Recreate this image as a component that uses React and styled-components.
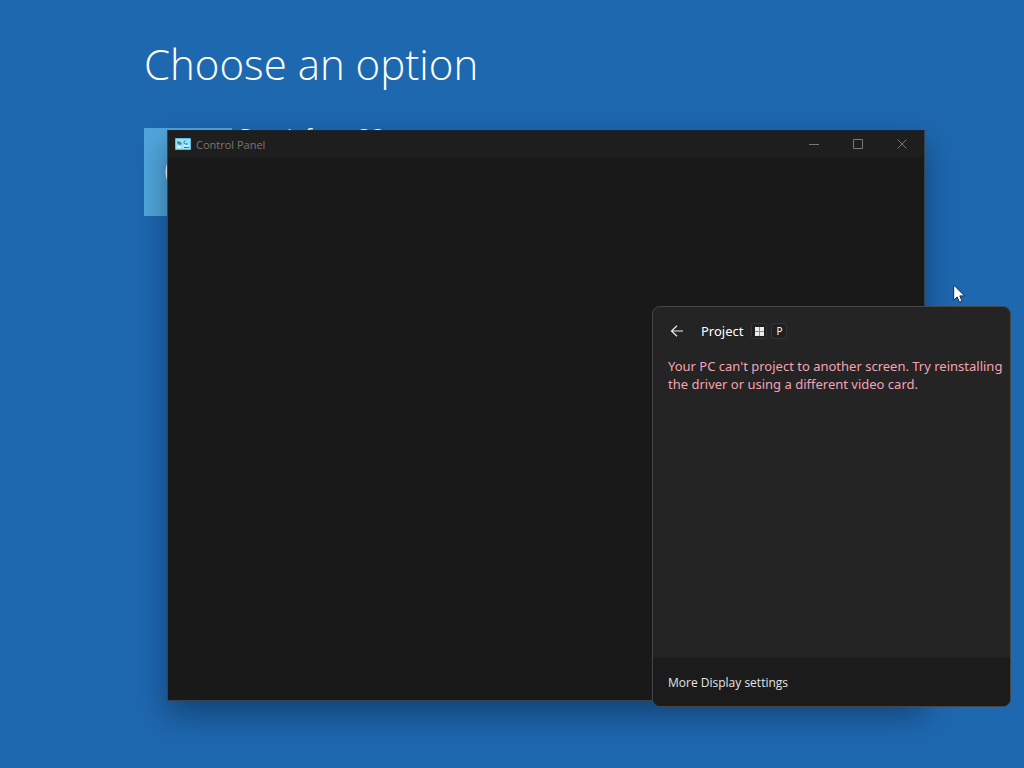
import React from "react";
import styled, { createGlobalStyle } from "styled-components";

const GlobalStyle = createGlobalStyle`
    * {
        box-sizing: border-box;
    }

    body {
        margin: 0;
        background-color: #1e68b0;
        font-family: "Open Sans", "Noto Sans", sans-serif;
        overflow: hidden;
    }

    button {
        padding: 0;
        border: none;
        background: none;
        color: inherit;
        font: inherit;
    }
`;

const Desktop = styled.div`
    position: relative;
    min-height: 100vh;
    overflow: hidden;
    background-color: #1e68b0;
`;

const Recovery = styled.main`
    padding: 34px 144px;
    color: #fff;
`;

const Heading = styled.h1`
    margin: 0 0 34px;
    font-size: 42px;
    line-height: 60px;
    font-weight: 300;
`;

const Option = styled.button`
    display: flex;
    align-items: flex-start;
    gap: 8px;
    text-align: left;
`;

const OptionTile = styled.span`
    display: grid;
    place-items: center;
    width: 88px;
    height: 88px;
    background-color: #50a7dd;
`;

const OptionName = styled.span`
    font-size: 20px;
    line-height: 16px;
`;

const ControlPanelWindow = styled.section`
    position: absolute;
    top: 130px;
    right: 99px;
    bottom: 67px;
    left: 167px;
    border: 1px solid #35434f;
    border-top-color: #1c2530;
    background-color: #191919;
    box-shadow: 0 14px 30px rgba(0, 10, 30, 0.4);
`;

const TitleBar = styled.header`
    display: flex;
    align-items: center;
    height: 26px;
    padding-left: 7px;
    background-color: #1e1e1e;
    color: #777;
`;

const WindowTitle = styled.h2`
    flex: 1;
    margin: 0 0 0 5px;
    font-size: 11px;
    font-weight: 400;
`;

const CaptionButton = styled.button`
    display: grid;
    place-items: center;
    width: 44px;
    height: 26px;
`;

const Flyout = styled.section`
    position: absolute;
    right: 13px;
    bottom: 61px;
    display: flex;
    flex-direction: column;
    width: 359px;
    height: 401px;
    border: 1px solid #464646;
    border-radius: 8px;
    overflow: hidden;
    background-color: #242424;
    color: #fff;
    font-family: "Noto Sans", "Open Sans", sans-serif;
`;

const FlyoutHeader = styled.header`
    display: flex;
    align-items: center;
    height: 48px;
    padding-left: 16px;
`;

const BackButton = styled.button`
    display: grid;
    place-items: center;
    width: 16px;
    height: 24px;
    margin-right: 16px;
`;

const FlyoutTitle = styled.h2`
    margin: 0 8px 0 0;
    font-size: 13px;
    font-weight: 400;
`;

const Key = styled.kbd`
    display: grid;
    place-items: center;
    width: 16px;
    height: 16px;
    margin-right: 4px;
    border: 1px solid #333;
    border-radius: 3px;
    background-color: #202020;
    font-family: inherit;
    font-size: 10px;
    line-height: 12px;
`;

const Message = styled.p`
    flex: 1;
    margin: 2px 0 0;
    padding: 0 4px 0 15px;
    color: #f5a3b4;
    font-size: 13px;
    line-height: 18px;
`;

const FlyoutFooter = styled.footer`
    display: flex;
    align-items: center;
    height: 49px;
    padding-left: 15px;
    border-top: 1px solid #202020;
    background-color: #1b1b1b;
`;

const SettingsLink = styled.a`
    color: #e4e4e4;
    font-family: "Open Sans", "Noto Sans", sans-serif;
    font-size: 12px;
    text-decoration: none;
`;

const Pointer = styled.svg`
    position: absolute;
    top: 284px;
    left: 953px;
`;

const ControlPanelIcon = () => (
    <svg width="16" height="12" viewBox="0 0 16 12" aria-hidden="true">
        <rect width="16" height="12" rx="1" fill="#58bde8" />
        <rect x="1" y="1" width="14" height="10" fill="#9ae0f5" />
        <path d="M2 3.5a3 3 0 0 0 5 2.5L5 3.5z" fill="#268abf" />
        <path d="M5 3.5V1.5h2.5z" fill="#d9e78b" />
        <path d="M10.5 2.5l-2 2 2 1.5h2.5" stroke="#286f9f" fill="none" />
        <path d="M2 9h4M8 9l2-2 1 1 3-1" stroke="#fff" fill="none" />
        <path d="M9 9.5h5" stroke="#2b81b6" />
    </svg>
);

const captions = [
    { label: "Minimize", path: "M0 5.5h10" },
    { label: "Maximize", path: "M.5 .5h9v9h-9z" },
    { label: "Close", path: "M.5 .5l9 9M9.5 .5l-9 9" },
];

const App = () => {
    return (
        <Desktop>
            <GlobalStyle />
            <Recovery>
                <Heading>Choose an option</Heading>
                <Option type="button">
                    <OptionTile>
                        <svg width="46" height="46" viewBox="0 0 46 46" aria-hidden="true">
                            <circle cx="23" cy="23" r="21" fill="none" stroke="#fff" strokeWidth="3" />
                        </svg>
                    </OptionTile>
                    <OptionName>Repair from OS</OptionName>
                </Option>
            </Recovery>
            <ControlPanelWindow>
                <TitleBar>
                    <ControlPanelIcon />
                    <WindowTitle>Control Panel</WindowTitle>
                    {captions.map(({ label, path }) => (
                        <CaptionButton key={label} type="button" aria-label={label}>
                            <svg width="10" height="10" viewBox="0 0 10 10" fill="none" stroke="#777">
                                <path d={path} />
                            </svg>
                        </CaptionButton>
                    ))}
                </TitleBar>
            </ControlPanelWindow>
            <Flyout>
                <FlyoutHeader>
                    <BackButton type="button" aria-label="Back">
                        <svg width="14" height="14" viewBox="0 0 14 14" fill="none" stroke="#eee" strokeWidth="1.2">
                            <path d="M13 7H1.5M7 1.8L1.5 7L7 12.2" />
                        </svg>
                    </BackButton>
                    <FlyoutTitle>Project</FlyoutTitle>
                    <Key aria-label="Windows">
                        <svg width="9" height="9" viewBox="0 0 9 9">
                            <path d="M0 0h9v9H0z" fill="#8c8c8c" />
                            <path d="M0 0h4v4H0zM5 0h4v4H5zM0 5h4v4H0zM5 5h4v4H5z" fill="#ececec" />
                        </svg>
                    </Key>
                    <Key>P</Key>
                </FlyoutHeader>
                <Message>
                    Your PC can't project to another screen. Try reinstalling the driver or using a different video card.
                </Message>
                <FlyoutFooter>
                    <SettingsLink href="#display">More Display settings</SettingsLink>
                </FlyoutFooter>
            </Flyout>
            <Pointer width="13" height="20" viewBox="0 0 13 20" aria-hidden="true">
                <path
                    d="M.7 1v15.2l3.5-3.3 2.3 5.3 2.5-1.1-2.2-5.2h4.7z"
                    fill="#fff"
                    stroke="#16304c"
                    strokeWidth="1"
                />
            </Pointer>
        </Desktop>
    );
};

export default App;
